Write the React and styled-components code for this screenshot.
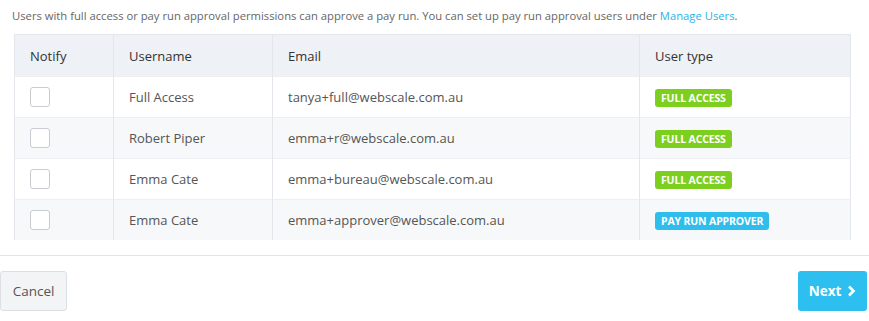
import React from 'react';
import styled, { createGlobalStyle } from 'styled-components';

const GlobalStyle = createGlobalStyle`
  html, body {
    margin: 0;
    padding: 0;
    background: #fff;
    font-family: "Open Sans", Lato, Arial, sans-serif;
    color: #555;
  }
`;

const Page = styled.div`
  width: 869px;
  padding-top: 9px;
`;

const Intro = styled.p`
  margin: 0 0 11px 12px;
  font-size: 11.25px;
  line-height: 14px;
  color: #666;
`;

const Link = styled.a`
  color: #2ab4e6;
  text-decoration: none;
`;

const TableWrap = styled.div`
  margin: 0 18px 0 14px;
`;

const Table = styled.table`
  width: 100%;
  border-collapse: collapse;
  border-left: 1px solid #e3e6ea;
  border-right: 1px solid #e3e6ea;
  border-top: 1px solid #e3e6ea;
`;

const Th = styled.th`
  height: 41px;
  padding: 0 15px;
  text-align: left;
  font-weight: 400;
  font-size: 13px;
  color: #333;
  background: #eef1f5;
  border-right: 1px solid #e3e6ea;
  width: ${(p) => p.$w || 'auto'};
  &:last-child { border-right: none; }
`;

const Tr = styled.tr`
  background: ${(p) => (p.$alt ? '#f7f8fa' : '#fff')};
`;

const Td = styled.td`
  height: 40px;
  padding: 0 15px;
  font-size: 13px;
  color: #555;
  border-right: 1px solid #e3e6ea;
  border-top: 1px solid #eceef1;
  &:last-child { border-right: none; }
`;

const Checkbox = styled.span`
  display: block;
  width: 18px;
  height: 18px;
  border: 1px solid #c8ccd2;
  border-radius: 3px;
  background: #fff;
`;

const Badge = styled.span`
  display: inline-block;
  padding: 3px 6px;
  border-radius: 3px;
  font-size: 10.5px;
  font-weight: 700;
  line-height: 12px;
  letter-spacing: -0.15px;
  color: #fff;
  background: ${(p) => (p.$kind === 'approver' ? '#2fbdec' : '#7ccf1f')};
`;

const Footer = styled.div`
  margin-top: 15px;
  border-top: 1px solid #e4e4e4;
  padding: 15px 2px 0 0;
  display: flex;
  justify-content: space-between;
  align-items: center;
`;

const Button = styled.button`
  height: 40px;
  border-radius: 3px;
  font-family: inherit;
  font-size: 13.5px;
  cursor: pointer;
  display: flex;
  align-items: center;
  gap: 6px;
`;

const CancelButton = styled(Button)`
  width: 67px;
  justify-content: center;
  background: #f3f4f6;
  border: 1px solid #dcdfe3;
  color: #555;
`;

const NextButton = styled(Button)`
  width: 69px;
  justify-content: center;
  background: #2dbfef;
  border: none;
  color: #fff;
  font-weight: 700;
`;

const users = [
  { name: 'Full Access', email: 'tanya+full@webscale.com.au', type: 'FULL ACCESS', kind: 'full' },
  { name: 'Robert Piper', email: 'emma+r@webscale.com.au', type: 'FULL ACCESS', kind: 'full' },
  { name: 'Emma Cate', email: 'emma+bureau@webscale.com.au', type: 'FULL ACCESS', kind: 'full' },
  { name: 'Emma Cate', email: 'emma+approver@webscale.com.au', type: 'PAY RUN APPROVER', kind: 'approver' },
];

export default function App() {
  return (
    <Page>
      <GlobalStyle />
      <Intro>
        Users with full access or pay run approval permissions can approve a pay run. You can set up pay run
        approval users under <Link href="#">Manage Users</Link>.
      </Intro>
      <TableWrap>
        <Table>
          <thead>
            <tr>
              <Th $w="68px">Notify</Th>
              <Th $w="128px">Username</Th>
              <Th $w="336px">Email</Th>
              <Th>User type</Th>
            </tr>
          </thead>
          <tbody>
            {users.map((u, i) => (
              <Tr key={u.email} $alt={i % 2 === 1}>
                <Td><Checkbox /></Td>
                <Td>{u.name}</Td>
                <Td>{u.email}</Td>
                <Td><Badge $kind={u.kind}>{u.type}</Badge></Td>
              </Tr>
            ))}
          </tbody>
        </Table>
      </TableWrap>
      <Footer>
        <CancelButton>Cancel</CancelButton>
        <NextButton>
          Next
          <svg width="9" height="12" viewBox="0 0 9 12">
            <path d="M2 1.5 L6.5 6 L2 10.5" fill="none" stroke="#fff" strokeWidth="2.6" />
          </svg>
        </NextButton>
      </Footer>
    </Page>
  );
}
